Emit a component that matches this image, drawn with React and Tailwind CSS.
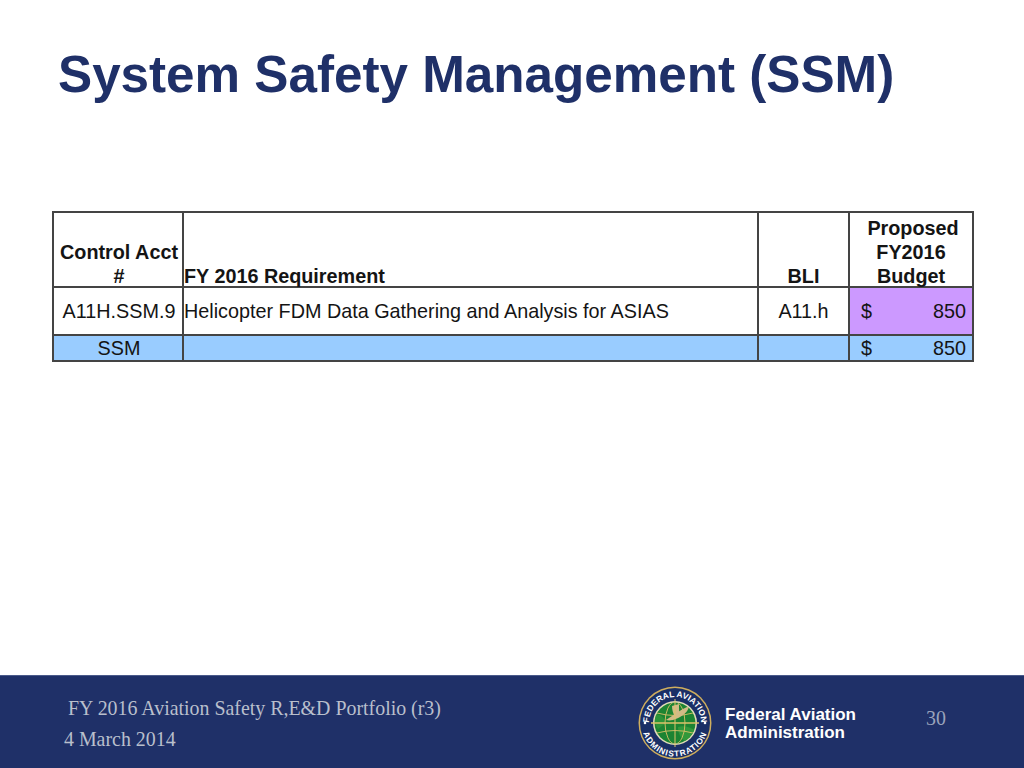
const sans = { fontFamily: '"Liberation Sans", Arial, sans-serif' };

function Logo() {
  return (
    <svg width="74" height="76" viewBox="0 0 74 76" className="shrink-0">
      <defs>
        <path id="topArc" d="M 37 64 A 26 26 0 1 1 37 12 A 26 26 0 1 1 37 64" />
        <path id="botArc" d="M 37 4.5 A 33.5 33.5 0 1 0 37 71.5 A 33.5 33.5 0 1 0 37 4.5" />
        <clipPath id="globeClip"><circle cx="37" cy="38" r="20.5" /></clipPath>
      </defs>
      <circle cx="37" cy="38" r="36.5" fill="#cfae5e" />
      <circle cx="37" cy="38" r="35" fill="#1a2f66" />
      <circle cx="37" cy="38" r="22" fill="#e2dcb8" />
      <circle cx="37" cy="38" r="20.5" fill="#1c8432" />
      <g clipPath="url(#globeClip)">
        <path d="M40 42 C46 40 52 42 58 46 L50 58 C44 55 40 50 40 42 Z" fill="#32983a" />
        <path d="M16 30 C22 28 26 32 28 38 L20 44 C17 40 16 34 16 30 Z" fill="#2c9338" />
        <g fill="none" stroke="#d8bf68" strokeWidth="0.9">
          <ellipse cx="37" cy="38" rx="10" ry="21" />
          <path d="M19 28 Q37 33 55 28" />
          <path d="M19 48 Q37 43 55 48" />
        </g>
        <path d="M28 35 C34 31 42 25 51 21 C50 27 45 31 39 33.5 C35 35.5 31 36 28 35 Z" fill="#d2bb86" />
        <path d="M37 32 C35 28 34 25 34 21 L41 19 C41 24 41 28 42 30 Z" fill="#d2bb86" />
      </g>
      <g stroke="#dcc26a" fill="none">
        <line x1="37" y1="14" x2="37" y2="62" strokeWidth="1" />
        <line x1="13" y1="38" x2="61" y2="38" strokeWidth="1.3" />
      </g>
      <text fill="#fff" fontSize="8.4" fontWeight="700" style={sans}>
        <textPath href="#topArc" startOffset="50%" textAnchor="middle">FEDERAL AVIATION</textPath>
      </text>
      <text fill="#fff" fontSize="8.4" fontWeight="700" style={sans} letterSpacing="0.9">
        <textPath href="#botArc" startOffset="50%" textAnchor="middle">ADMINISTRATION</textPath>
      </text>
      <circle cx="7" cy="38" r="1.3" fill="#fff" />
      <circle cx="67" cy="38" r="1.3" fill="#fff" />
    </svg>
  );
}

const cell = "border-2 border-[#444444] p-0";

export default function App() {
  return (
    <div className="flex flex-col w-[1024px] h-[768px] bg-white overflow-hidden" style={sans}>
      <div className="flex-1 flex flex-col">
        <h1 className="ml-[58px] mt-[44px] text-[51.2px] leading-[62px] font-bold text-[#1f3068] whitespace-nowrap">
          System Safety Management (SSM)
        </h1>
        <table className="ml-[52px] mt-[105px] w-[920px] table-fixed border-collapse text-[19.8px] leading-[24px] text-[#141414]">
          <colgroup>
            <col className="w-[130px]" />
            <col className="w-[575px]" />
            <col className="w-[91px]" />
            <col className="w-[124px]" />
          </colgroup>
          <tbody>
            <tr className="h-[75px] font-bold align-bottom">
              <td className={`${cell} pl-[2px] text-center whitespace-nowrap`}><div className="-mb-[2px]">Control Acct<br />#</div></td>
              <td className={`${cell} text-left`}><div className="-mb-[2px]">FY 2016 Requirement</div></td>
              <td className={`${cell} text-center`}><div className="-mb-[2px]">BLI</div></td>
              <td className={`${cell} text-center`}><div className="-mb-[2px]"><span className="pl-[4px]">Proposed</span><br />FY2016<br />Budget</div></td>
            </tr>
            <tr className="h-[48px]">
              <td className={`${cell} pl-[2px] text-center whitespace-nowrap`}>A11H.SSM.9</td>
              <td className={`${cell} text-left whitespace-nowrap`}>Helicopter FDM Data Gathering and Analysis for ASIAS</td>
              <td className={`${cell} text-center`}>A11.h</td>
              <td className={`${cell} bg-[#cc99ff]`}>
                <div className="flex justify-between pl-[11px] pr-[6px]"><span>$</span><span>850</span></div>
              </td>
            </tr>
            <tr className="h-[26px] bg-[#99ccff]">
              <td className={`${cell} pl-[2px] text-center`}>SSM</td>
              <td className={cell}></td>
              <td className={cell}></td>
              <td className={cell}>
                <div className="flex justify-between pl-[11px] pr-[6px]"><span>$</span><span>850</span></div>
              </td>
            </tr>
          </tbody>
        </table>
      </div>
      <footer className="h-[93px] bg-[#1f3068] border-t border-[#4a5a8a] flex items-start shrink-0">
        <div className="w-[638px] shrink-0 pl-[64px] pt-[20px] text-[19.9px] text-[#b9bfcc]" style={{ fontFamily: '"Liberation Serif", "Times New Roman", serif' }}>
          <div className="pl-[4px] leading-[24px] whitespace-nowrap">FY 2016 Aviation Safety R,E&amp;D Portfolio (r3)</div>
          <div className="mt-[7px] leading-[24px] whitespace-nowrap">4 March 2014</div>
        </div>
        <div className="pt-[9px] w-[87px] shrink-0"><Logo /></div>
        <div className="pt-[30px] w-[201px] shrink-0 text-[17px] leading-[18px] font-bold text-white">
          Federal Aviation<br />Administration
        </div>
        <div className="pt-[31px] text-[19.9px] leading-[22px] text-[#9aa3bb]" style={{ fontFamily: '"Liberation Serif", "Times New Roman", serif' }}>30</div>
      </footer>
    </div>
  );
}
